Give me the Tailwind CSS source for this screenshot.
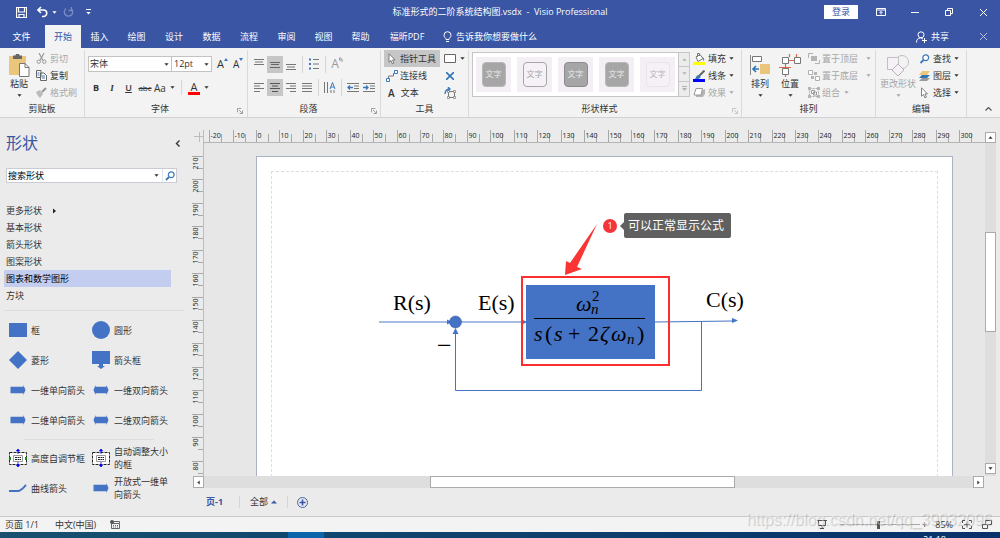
<!DOCTYPE html>
<html lang="zh-CN">
<head>
    <meta charset="UTF-8">
    <meta name="viewport" content="width=device-width, initial-scale=1">
    <title>标准形式的二阶系统结构图.vsdx - Visio Professional</title>
    <script src="https://cdn.jsdelivr.net/npm/@tailwindcss/browser@4"></script>
</head>
<body class="flex h-screen flex-col overflow-hidden bg-[#ebebeb] font-['Open_Sans','Noto_Sans_CJK_SC',sans-serif] text-[9px] leading-3 text-[#333333]">

    <!-- shared icons -->
    <svg class="hidden">
        <symbol id="caret" viewBox="0 0 5 3"><path d="M.4.300h4.200L2.500 2.700z" fill="currentColor"/></symbol>
        <symbol id="launcher" viewBox="0 0 7 7"><path d="M.5 5V.5H5M2.500 2.500l3 3M6.500 3v3.500H3" fill="none" stroke="currentColor"/></symbol>
        <symbol id="close" viewBox="0 0 9 9"><path d="M1 1l7 7M8 1l-7 7" fill="none" stroke="currentColor"/></symbol>
        <symbol id="pointer" viewBox="0 0 8 12"><path d="M1 .8v8.400l2-1.800 1.400 3.400 1.500-.7-1.400-3.200H7z" fill="#fff" stroke="#666" stroke-width=".8"/></symbol>
        <symbol id="loupe" viewBox="0 0 10 10"><circle cx="6.200" cy="3.800" r="2.900" fill="#fff" stroke="#3c78b8" stroke-width="1.200"/><path d="M4 6L1 9" stroke="#3c78b8" stroke-width="1.800"/></symbol>
        <symbol id="one-way" viewBox="0 0 18 12"><path d="M0 2h15.500V0L18 6l-2.500 6v-2H0z" fill="#4472c4"/></symbol>
        <symbol id="two-way" viewBox="0 0 18 12"><path d="M0 6l2.500-6v2h13V0L18 6l-2.500 6v-2h-13v2z" fill="#4472c4"/></symbol>
    </svg>

    <!-- title bar -->
    <header class="shrink-0 bg-[#3955a3] text-white">
        <div class="grid h-6 grid-cols-[1fr_auto_1fr] items-center">
            <div class="flex items-center pl-4">
                <button aria-label="保存"><svg class="h-[11px] w-[11px]" viewBox="0 0 11 11"><path d="M.5.5h10v10h-10zM2.500.5V5h6V.5M3 10.500V7.500h5v3" fill="none" stroke="#fff" stroke-width="1.200"/></svg></button>
                <button class="ml-2.5" aria-label="撤消"><svg class="h-3 w-[11px]" viewBox="0 0 11 12"><path d="M1 4h5.500a3 3 0 0 1 0 6.500H5M4 1L1 4l3 3" fill="none" stroke="#fff" stroke-width="1.600"/></svg></button>
                <svg class="ml-1 h-[3px] w-[5px]"><use href="#caret"/></svg>
                <button class="ml-1.5" aria-label="重复"><svg class="h-3 w-[11px]" viewBox="0 0 11 12"><path d="M8 2.500a4.200 4.200 0 1 1-5 0M5.500 4.500H8.500V1" fill="none" stroke="#7a8dc4" stroke-width="1.300"/></svg></button>
                <button class="ml-3" aria-label="自定义快速访问工具栏"><svg class="h-1.5 w-[5px]" viewBox="0 0 5 6"><path d="M0 .5h5" stroke="#fff"/><path d="M.3 3h4.400L2.500 5.500z" fill="#fff"/></svg></button>
            </div>
            <h1 class="whitespace-pre">标准形式的二阶系统结构图.vsdx  -  Visio Professional</h1>
            <div class="flex items-center justify-end">
                <button class="mr-1.5 h-3.5 w-[34px] bg-white text-[#3955a3]">登录</button>
                <button class="flex w-[34px] justify-center" aria-label="功能区显示选项"><svg class="h-2 w-[10px]" viewBox="0 0 10 8"><path d="M.5.5h9v7h-9zM.5 2h9M5 6.500V3.500M3.500 5L5 3.500 6.500 5" fill="none" stroke="#fff"/></svg></button>
                <button class="flex w-[34px] justify-center" aria-label="最小化"><svg class="h-2 w-2" viewBox="0 0 8 8"><path d="M0 4.500h8" stroke="#fff"/></svg></button>
                <button class="flex w-[34px] justify-center" aria-label="还原"><svg class="h-2 w-2" viewBox="0 0 8 8"><path d="M.5 2.500h5v5h-5zM2.500 2V.5h5v5H6" fill="none" stroke="#fff"/></svg></button>
                <button class="flex w-[34px] justify-center" aria-label="关闭"><svg class="h-[9px] w-[9px]"><use href="#close"/></svg></button>
            </div>
        </div>

        <nav class="flex h-6 items-stretch pt-px">
            <button class="w-[45px] pr-0.5">文件</button>
            <button class="w-9 bg-[#f3f3f3] text-[#3955a3]">开始</button>
            <button class="w-[37px]">插入</button>
            <button class="w-[37px]">绘图</button>
            <button class="w-[38px]">设计</button>
            <button class="w-[37px]">数据</button>
            <button class="w-[38px]">流程</button>
            <button class="w-[37px]">审阅</button>
            <button class="w-[37px]">视图</button>
            <button class="w-[37px]">帮助</button>
            <button class="w-14 whitespace-nowrap">福昕PDF</button>
            <button class="ml-2 flex items-center gap-1 whitespace-nowrap">
                <svg class="h-3 w-[9px]" viewBox="0 0 9 12"><path d="M3 8.500c0-1.500-2-2-2-4.300a3.500 3.500 0 0 1 7 0c0 2.300-2 2.800-2 4.300zM3 10.500h3" fill="none" stroke="#fff"/></svg>
                告诉我你想要做什么
            </button>
            <button class="ml-auto flex items-center gap-1">
                <svg class="h-3 w-[11px]" viewBox="0 0 11 12"><circle cx="5" cy="3.800" r="3" fill="none" stroke="#fff"/><path d="M.5 11.500c0-3 1.500-4.500 4-4.500M5 7l2 1M8.500 7v5M6 9.500h5" fill="none" stroke="#fff"/></svg>
                共享
            </button>
            <button class="ml-[17px] flex w-[34px] items-center justify-center text-[#b8c2e0]" aria-label="关闭文档"><svg class="h-[9px] w-[9px]"><use href="#close"/></svg></button>
        </nav>
    </header>

    <!-- ribbon -->
    <section class="flex h-[70px] shrink-0 border-b border-[#d2d2d2] bg-[#f3f3f3] pt-0.5 *:shrink-0">
        <div class="flex w-[85px] flex-col border-r border-[#dadada]">
            <div class="flex flex-1 pl-2">
                <button class="flex w-[22px] flex-col items-center">
                    <svg class="mt-1 h-6 w-[22px]" viewBox="0 0 22 24"><path d="M1 2h17v19H1z" fill="#ecc57c"/><path d="M5 1.500h2.500a2 2 0 0 1 4 0H14V5H5z" fill="#666"/><path d="M11.500 9.500H17l4 4v9h-9.500z" fill="#fff" stroke="#777"/><path d="M17 9.500v4h4" fill="none" stroke="#777"/></svg>
                    <span>粘贴</span>
                    <svg class="mt-1 h-[3px] w-[5px]"><use href="#caret"/></svg>
                </button>
                <div class="ml-1.5 grid grid-rows-3 whitespace-nowrap">
                    <button class="flex items-center gap-[3px] text-[#a6a6a6]"><svg class="h-[11px] w-[11px]" viewBox="0 0 11 11"><path d="M3 0l4 7.500M8 0L4 7.500" stroke="#999" stroke-width="1.200"/><circle cx="2.700" cy="8.700" r="1.700" fill="none" stroke="#999"/><circle cx="8.300" cy="8.700" r="1.700" fill="none" stroke="#999"/></svg>剪切</button>
                    <button class="flex items-center gap-[3px]"><svg class="h-[11px] w-[11px]" viewBox="0 0 11 11"><path d="M.5.5H5v7H.5zM4.500 3H8l2.500 2.500v5h-6z" fill="#fff" stroke="#666"/><path d="M6 6h3M6 8h3M1.500 3h2M1.500 5h2" stroke="#3c78b8"/></svg>复制</button>
                    <button class="flex items-center gap-[3px] text-[#a6a6a6]"><svg class="h-[11px] w-[11px]" viewBox="0 0 11 11"><path d="M0 5l4-2 3 4-3 4-2-2z" fill="#bbb"/><path d="M6 5l4-4" stroke="#999" stroke-width="2.200"/></svg>格式刷</button>
                </div>
            </div>
            <div class="flex h-4 items-center justify-center">剪贴板</div>
        </div>

        <div class="flex w-[163px] flex-col border-r border-[#dadada]">
            <div class="flex flex-1 flex-col gap-1.5 pt-[5px] pl-[3px]">
                <div class="flex h-[18px] items-center">
                    <label class="relative flex items-center"><select aria-label="字体" class="h-4 w-[84px] appearance-none border border-[#c3c3c3] bg-white pl-px text-[9px]"><option>宋体</option></select><svg class="pointer-events-none absolute right-[3px] h-[3px] w-[5px]"><use href="#caret"/></svg></label>
                    <label class="relative flex items-center"><select aria-label="字号" class="h-4 w-10 appearance-none border border-l-0 border-[#c3c3c3] bg-white pl-0.5 text-[9px]"><option>12pt</option></select><svg class="pointer-events-none absolute right-[3px] h-[3px] w-[5px]"><use href="#caret"/></svg></label>
                    <button class="ml-[5px] flex w-3 text-[11px]" aria-label="增大字号">A<svg class="h-[3px] w-1" viewBox="0 0 4 3"><path d="M0 3h4L2 0z" fill="#3c78b8"/></svg></button>
                    <button class="ml-1 flex w-3 text-[10px]" aria-label="减小字号">A<svg class="h-[3px] w-1" viewBox="0 0 4 3"><path d="M0 0h4L2 3z" fill="#3c78b8"/></svg></button>
                </div>
                <div class="flex h-[17px] items-center">
                    <button class="w-4 font-bold">B</button>
                    <button class="w-4 font-['Liberation_Serif'] font-bold italic">I</button>
                    <button class="w-[17px] font-semibold underline">U</button>
                    <button class="w-4 text-[8px] line-through">abc</button>
                    <button class="flex w-[22px] items-center justify-between pl-px text-[10px]">Aa<svg class="h-[3px] w-[5px]"><use href="#caret"/></svg></button>
                    <span class="mx-1.5 h-[15px] w-px bg-[#d5d5d5]"></span>
                    <button class="flex items-center gap-1"><span class="h-3.5 w-3 border-b-[3px] border-[#ff0000] text-[11px] leading-[11px]">A</span><svg class="h-[3px] w-[5px]"><use href="#caret"/></svg></button>
                </div>
            </div>
            <div class="grid h-4 grid-cols-[1fr_auto_1fr] items-center pr-1"><span class="col-start-2 pr-2">字体</span><svg class="mt-1 h-1.5 w-1.5 justify-self-end text-[#888]"><use href="#launcher"/></svg></div>
        </div>

        <div class="flex w-[133px] flex-col border-r border-[#dadada]">
            <div class="flex flex-1 flex-col gap-1.5 pt-[5px] pl-[3px]">
                <div class="flex h-[18px] items-center *:flex *:h-[17px] *:items-center *:justify-center">
                    <button class="w-4" aria-label="顶端对齐"><svg class="h-[11px] w-[10px]" viewBox="0 0 10 11"><path d="M0 .5h10M1 3h8M0 5.500h10" stroke="#777"/></svg></button>
                    <button class="w-4 bg-[#c6c6c6]" aria-label="中部对齐"><svg class="h-[11px] w-[10px]" viewBox="0 0 10 11"><path d="M0 3.500h10M1 5.500h8M0 8.500h10" stroke="#666"/></svg></button>
                    <button class="w-4" aria-label="底端对齐"><svg class="h-[11px] w-[10px]" viewBox="0 0 10 11"><path d="M0 5.500h10M1 8h8M0 10.500h10" stroke="#777"/></svg></button>
                    <span class="mx-[3px] w-px bg-[#d5d5d5]"></span>
                    <button class="w-4" aria-label="项目符号"><svg class="h-3 w-[10px]" viewBox="0 0 10 12"><path d="M0 1.500h2M0 6h2M0 10.500h2" stroke="#3c78b8" stroke-width="2"/><path d="M4 1.500h6M4 6h6M4 10.500h6" stroke="#777"/></svg></button>
                    <span class="mx-[3px] w-px bg-[#d5d5d5]"></span>
                    <button class="w-4 text-[12px] text-[#999]" aria-label="旋转文本">A<svg class="mb-2 h-1.5 w-1" viewBox="0 0 4 6"><path d="M0 2h3v3M1.500 0L0 2l1.500 2" fill="none" stroke="#999"/></svg></button>
                </div>
                <div class="flex h-[17px] items-center *:flex *:h-[17px] *:items-center *:justify-center">
                    <button class="w-4" aria-label="左对齐"><svg class="h-[9px] w-[10px]" viewBox="0 0 10 9"><path d="M0 .5h10M0 3h6M0 5.500h10M0 8.500h6" stroke="#777"/></svg></button>
                    <button class="w-4 bg-[#c6c6c6]" aria-label="居中"><svg class="h-[9px] w-[10px]" viewBox="0 0 10 9"><path d="M0 .5h10M2 3h6M0 5.500h10M2 8.500h6" stroke="#555"/></svg></button>
                    <button class="w-4" aria-label="右对齐"><svg class="h-[9px] w-[10px]" viewBox="0 0 10 9"><path d="M0 .5h10M4 3h6M0 5.500h10M4 8.500h6" stroke="#777"/></svg></button>
                    <button class="w-4" aria-label="两端对齐"><svg class="h-[9px] w-[10px]" viewBox="0 0 10 9"><path d="M0 .5h10M0 3h10M0 5.500h10M0 8.500h10" stroke="#777"/></svg></button>
                    <span class="mx-[3px] w-px bg-[#d5d5d5]"></span>
                    <button class="w-4" aria-label="文字方向"><svg class="h-[11px] w-3" viewBox="0 0 12 11"><path d="M.5 0v11M3.500 0v11M7 8v3M10 8v3" stroke="#777"/><path d="M6 7l2.500-6.500L11 7M7 5h3" fill="none" stroke="#3c78b8"/></svg></button>
                    <span class="mx-[3px] w-px bg-[#d5d5d5]"></span>
                    <button class="w-4" aria-label="减少缩进"><svg class="h-[9px] w-3" viewBox="0 0 12 9"><path d="M0 .5h12M7 3h5M7 5.500h5M0 8.500h12" stroke="#777"/><path d="M6 4.500H1M3 2.500l-2 2 2 2" fill="none" stroke="#3c78b8" stroke-width="1.300"/></svg></button>
                    <button class="w-4" aria-label="增加缩进"><svg class="h-[9px] w-3" viewBox="0 0 12 9"><path d="M0 .5h12M7 3h5M7 5.500h5M0 8.500h12" stroke="#777"/><path d="M0 4.500h5M3 2.500l2 2-2 2" fill="none" stroke="#3c78b8" stroke-width="1.300"/></svg></button>
                </div>
            </div>
            <div class="grid h-4 grid-cols-[1fr_auto_1fr] items-center pr-[3px]"><span class="col-start-2 pr-2">段落</span><svg class="mt-1 h-1.5 w-1.5 justify-self-end text-[#888]"><use href="#launcher"/></svg></div>
        </div>

        <div class="flex w-[88px] flex-col border-r border-[#dadada]">
            <div class="grid flex-1 grid-cols-[56px_1fr] grid-rows-3 gap-x-1 pl-[3px]">
                <button class="flex items-center gap-1 bg-[#c6c6c6] pl-1 whitespace-nowrap"><svg class="h-3 w-2"><use href="#pointer"/></svg>指针工具</button>
                <button class="flex items-center gap-1" aria-label="矩形"><svg class="h-[9px] w-3" viewBox="0 0 12 9"><path d="M.5.5h11v8H.5z" fill="#fff" stroke="#666"/></svg><svg class="h-[3px] w-[5px]"><use href="#caret"/></svg></button>
                <button class="flex items-center gap-0.5 pl-0.5 whitespace-nowrap"><svg class="h-3 w-3" viewBox="0 0 12 12"><path d="M2.500 8V6h5V3" fill="none" stroke="#777"/><path d="M.5 8.500h3v3h-3zM8.500.5h3v3h-3z" fill="#fff" stroke="#3c78b8"/></svg>连接线</button>
                <button class="flex items-center pl-0.5" aria-label="连接点"><svg class="h-2 w-2" viewBox="0 0 8 8"><path d="M0 0l8 8M8 0L0 8" stroke="#2e75b6" stroke-width="1.600"/></svg></button>
                <button class="flex items-center gap-1.5 pl-1"><span class="text-[10px] font-semibold">A</span>文本</button>
                <button class="flex items-center" aria-label="文本块"><svg class="h-3 w-3" viewBox="0 0 12 12"><path d="M4.500 4.500h6v6h-6z" fill="none" stroke="#777"/><path d="M3.500 3.500h2v2h-2zM9.500 3.500h2v2h-2zM3.500 9.500h2v2h-2zM9.500 9.500h2v2h-2z" fill="#fff" stroke="#777" stroke-width=".7"/><path d="M1 7c0-3 1-4.500 4.500-5M4 0l2 2-2 1.500" fill="none" stroke="#3c78b8" stroke-width="1.300"/></svg></button>
            </div>
            <div class="flex h-4 items-center justify-center">工具</div>
        </div>

        <div class="flex w-[273px] flex-col border-r border-[#dadada]">
            <div class="flex flex-1 pl-[3px]">
                <div class="mt-0.5 flex h-[45px] w-[218px] border border-[#c6c6c6] bg-white">
                    <div class="flex flex-1 items-center gap-1.5 pl-[3px] *:flex *:h-[35px] *:w-[35px] *:items-center *:justify-center *:bg-[#f4eff5]">
                        <button><span class="h-[25px] w-6 rounded border border-[#b8b8b8] bg-[#a6a6a6] pt-[5px] text-[8px] text-[#e8e8e8]">文字</span></button>
                        <button><span class="h-[25px] w-6 rounded border border-[#a6a6a6] bg-[#f5f1f6] pt-[5px] text-[8px] text-[#a6a6a6]">文字</span></button>
                        <button><span class="h-[25px] w-6 rounded border border-[#8c8c8c] bg-[#a6a6a6] pt-[5px] text-[8px] text-[#e8e8e8]">文字</span></button>
                        <button><span class="h-[25px] w-6 rounded border border-[#b8b8b8] bg-[#a6a6a6] pt-[5px] text-[8px] text-[#e8e8e8]">文字</span></button>
                        <button><span class="h-[25px] w-6 rounded border border-[#e9e4ea] bg-[#f5f1f6] pt-[5px] text-[8px] text-[#b4b4b4]">文字</span></button>
                    </div>
                    <div class="grid w-[11px] grid-rows-3 divide-y divide-[#c6c6c6] border-l border-[#c6c6c6] bg-[#ececec] text-[#b0b0b0] *:flex *:items-center *:justify-center">
                        <button aria-label="上一行"><svg class="h-[3px] w-[5px] rotate-180"><use href="#caret"/></svg></button>
                        <button aria-label="下一行"><svg class="h-[3px] w-[5px]"><use href="#caret"/></svg></button>
                        <button aria-label="其他"><svg class="h-[5px] w-[5px]" viewBox="0 0 5 5"><path d="M0 .5h5" stroke="#b0b0b0"/><path d="M0 2h5L2.500 5z" fill="#b0b0b0"/></svg></button>
                    </div>
                </div>
                <div class="ml-[3px] grid grid-rows-3 whitespace-nowrap">
                    <button class="flex items-center gap-[3px]"><svg class="h-3 w-3" viewBox="0 0 12 12"><path d="M3 4l4-2.500 3 4-5 3z" fill="#fff" stroke="#777"/><path d="M4.500 4V.5h2V3" fill="none" stroke="#777"/><path d="M9.500 4c2 1.500 2 3 1 4z" fill="#3c78b8"/><path d="M0 9h12v3H0z" fill="#ffff00"/></svg>填充<svg class="h-[3px] w-[5px]"><use href="#caret"/></svg></button>
                    <button class="flex items-center gap-[3px]"><svg class="h-3 w-3" viewBox="0 0 12 12"><path d="M11.500.5L6 6" stroke="#666" stroke-width="2"/><path d="M2 9c1-1 1-4 4-4l1.500 1.500C7.500 9 5 9.500 2 9z" fill="#3c78b8"/><path d="M0 9h12v3H0z" fill="#0000ff"/></svg>线条<svg class="h-[3px] w-[5px]"><use href="#caret"/></svg></button>
                    <button class="flex items-center gap-[3px] text-[#a6a6a6]"><svg class="h-3 w-3" viewBox="0 0 12 12"><path d="M3 5v5h7l2-3V2z" fill="#b5b5b5"/><path d="M3 1.500h6.500L8 8H1z" fill="#fff" stroke="#999"/></svg>效果<svg class="h-[3px] w-[5px]"><use href="#caret"/></svg></button>
                </div>
            </div>
            <div class="grid h-4 grid-cols-[1fr_auto_1fr] items-center pr-[3px]"><span class="col-start-2 pr-2">形状样式</span><svg class="mt-1 h-1.5 w-1.5 justify-self-end text-[#bbb]"><use href="#launcher"/></svg></div>
        </div>

        <div class="flex w-[134px] flex-col border-r border-[#dadada]">
            <div class="flex flex-1 pl-1.5">
                <button class="flex w-6 flex-col items-center">
                    <svg class="mt-1 h-6 w-5" viewBox="0 0 20 24"><path d="M.5 1v20" stroke="#888"/><path d="M2.500 2.500h9v5h-9z" fill="#fff" stroke="#777"/><path d="M10 10h10v10H10z" fill="#ecc57c"/><path d="M9 15H3.500M6 12l-3 3 3 3" fill="none" stroke="#2e75b6" stroke-width="1.600"/></svg>
                    <span>排列</span>
                    <svg class="mt-1 h-[3px] w-[5px]"><use href="#caret"/></svg>
                </button>
                <button class="ml-1.5 flex w-6 flex-col items-center">
                    <svg class="mt-1 h-6 w-[22px]" viewBox="0 0 22 24"><path d="M0 13.500h12M9 6.500h7M6.500 9v6M10.500 0v3M17.500 0v3M6.500 20v3" stroke="#e0694a" stroke-width="1.200"/><path d="M3.500 3.500h6v6h-6zM15.500 3.500h6v6h-6zM3.500 14.500h6v6h-6z" fill="#fff" stroke="#777"/></svg>
                    <span>位置</span>
                    <svg class="mt-1 h-[3px] w-[5px]"><use href="#caret"/></svg>
                </button>
                <div class="ml-1.5 grid grid-rows-3 whitespace-nowrap text-[#a6a6a6]">
                    <button class="flex items-center gap-0.5"><svg class="h-[11px] w-3" viewBox="0 0 12 11"><path d="M.5 5V.5H5M11.500 7v3.500H7" fill="none" stroke="#b0b0b0"/><path d="M3 3h6v5H3z" fill="#b5b5b5"/></svg>置于顶层<svg class="ml-1.5 h-[3px] w-[5px]"><use href="#caret"/></svg></button>
                    <button class="flex items-center gap-0.5"><svg class="h-[11px] w-3" viewBox="0 0 12 11"><path d="M.5.5h4v4h-4zM7.500 6.500h4v4h-4z" fill="#fff" stroke="#b0b0b0"/><path d="M6 2h3v3H6zM3 6h3v3H3z" fill="#b5b5b5"/></svg>置于底层<svg class="ml-1.5 h-[3px] w-[5px]"><use href="#caret"/></svg></button>
                    <button class="flex items-center gap-0.5"><svg class="h-[11px] w-3" viewBox="0 0 12 11"><path d="M1.500 1.500h9v8h-9z" fill="none" stroke="#aaa" stroke-dasharray="2 1"/><path d="M3.500 3.500h3v3h-3zM5.500 5h3v3h-3z" fill="#fff" stroke="#999"/><path d="M0 0h3v3H0zM9 0h3v3H9zM0 8h3v3H0zM9 8h3v3H9z" fill="#b5b5b5"/></svg>组合<svg class="ml-0.5 h-[3px] w-[5px]"><use href="#caret"/></svg></button>
                </div>
            </div>
            <div class="flex h-4 items-center justify-center">排列</div>
        </div>

        <div class="flex w-[91px] flex-col border-r border-[#dadada]">
            <div class="flex flex-1 pl-1">
                <button class="flex w-9 flex-col items-center whitespace-nowrap text-[#a6a6a6]">
                    <svg class="mt-1 h-6 w-[22px]" viewBox="0 0 22 24"><circle cx="15" cy="8" r="6.500" fill="#f3f3f3" stroke="#c0c0c0"/><path d="M.5 3.500h11v12H.5z" fill="#f6f1f7" stroke="#c0c0c0"/><path d="M11 10l6 6-6 6-6-6z" fill="#f6f1f7" stroke="#b5b5b5"/></svg>
                    <span>更改形状</span>
                    <svg class="mt-1 h-[3px] w-[5px]"><use href="#caret"/></svg>
                </button>
                <div class="ml-[3px] grid grid-rows-3 whitespace-nowrap">
                    <button class="flex items-center gap-[3px]"><svg class="h-[10px] w-[11px]"><use href="#loupe"/></svg>查找<svg class="h-[3px] w-[5px]"><use href="#caret"/></svg></button>
                    <button class="flex items-center gap-[3px]"><svg class="h-[10px] w-[11px]" viewBox="0 0 11 10"><path d="M3 7h8l-3 3H0z" fill="#999"/><path d="M3 4h8L8 7H0z" fill="#2e75b6"/><path d="M3 0h8L8 4H0z" fill="#ecc57c"/></svg>图层<svg class="h-[3px] w-[5px]"><use href="#caret"/></svg></button>
                    <button class="flex items-center gap-[3px]"><svg class="h-3 w-[11px]"><use href="#pointer"/></svg>选择<svg class="h-[3px] w-[5px]"><use href="#caret"/></svg></button>
                </div>
            </div>
            <div class="flex h-4 items-center justify-center">编辑</div>
        </div>
        <button class="mr-2 mb-1.5 ml-auto self-end" aria-label="折叠功能区"><svg class="h-1 w-[7px]" viewBox="0 0 7 4"><path d="M.5 3.500l3-3 3 3" fill="none" stroke="#555" stroke-width="1.200"/></svg></button>
    </section>

    <main class="flex min-h-0 flex-1">
        <!-- shapes panel -->
        <aside class="w-[190px] shrink-0 overflow-hidden">
            <div class="flex h-[50px] items-center justify-between pr-2.5 pl-1.5">
                <h2 class="text-[16px] leading-5 text-[#3955a3]">形状</h2>
                <button aria-label="最小化形状窗口"><svg class="h-[7px] w-[5px]" viewBox="0 0 5 7"><path d="M4.500.5l-3 3 3 3" fill="none" stroke="#333" stroke-width="1.400"/></svg></button>
            </div>
            <div class="mr-[13px] ml-1.5 flex h-[15px] border border-[#c9ccd3] bg-white">
                <input type="text" aria-label="搜索形状" value="搜索形状" class="min-w-0 flex-1 pl-px text-[9px] text-black outline-none">
                <button class="px-[3px]" aria-label="搜索选项"><svg class="h-[3px] w-[5px]"><use href="#caret"/></svg></button>
                <button class="flex w-3.5 items-center justify-center border-l border-[#dfe3ea]" aria-label="搜索"><svg class="h-[10px] w-[10px]"><use href="#loupe"/></svg></button>
            </div>
            <ul class="mt-[19px] mr-[19px] ml-1 *:flex *:h-[17px] *:items-center *:pl-0.5">
                <li>更多形状<svg class="ml-[11px] h-[6px] w-1" viewBox="0 0 4 6"><path d="M0 .5v5L3 3z" fill="#222"/></svg></li>
                <li>基本形状</li>
                <li>箭头形状</li>
                <li>图案形状</li>
                <li class="bg-[#c2cdf0] text-black">图表和数学图形</li>
                <li>方块</li>
            </ul>
            <div class="mt-1.5 mr-1.5 ml-1 h-px bg-[#dcdcdc]"></div>
            <div class="mt-1 ml-[9px] grid auto-rows-[30px] grid-cols-[83px_83px] *:flex *:items-center *:gap-1 *:leading-[13px]">
                <div><svg class="h-[18px] w-[18px] shrink-0"><path d="M0 2h18v14H0z" fill="#4472c4"/></svg>框</div>
                <div><svg class="h-[18px] w-[18px] shrink-0"><circle cx="9" cy="9" r="9" fill="#4472c4"/></svg>圆形</div>
                <div><svg class="h-[18px] w-[18px] shrink-0"><path d="M9 0l9 9-9 9-9-9z" fill="#4472c4"/></svg>菱形</div>
                <div><svg class="h-[18px] w-[18px] shrink-0"><path d="M0 0h18v13h-7v2h2l-4 3-4-3h2v-2H0z" fill="#4472c4"/></svg>箭头框</div>
                <div><svg class="h-[10px] w-[18px] shrink-0"><use href="#one-way"/></svg>一维单向箭头</div>
                <div><svg class="h-[10px] w-[18px] shrink-0"><use href="#two-way"/></svg>一维双向箭头</div>
                <div><svg class="h-[10px] w-[18px] shrink-0"><use href="#one-way"/></svg>二维单向箭头</div>
                <div><svg class="h-[10px] w-[18px] shrink-0"><use href="#two-way"/></svg>二维双向箭头</div>
            </div>
            <div class="mt-1 mr-9 ml-6 h-px bg-[#dcdcdc]"></div>
            <div class="mt-[3px] ml-[9px] grid auto-rows-[30px] grid-cols-[83px_83px] *:flex *:items-center *:gap-1 *:leading-[13px]">
                <div><svg class="h-5 w-[18px] shrink-0" viewBox="0 0 18 20"><path d="M.5 4.500h17v12H.5z" fill="#fff" stroke="#222" stroke-dasharray="3 1"/><path d="M4.500 7.500h9v6h-9z" fill="none" stroke="#999"/><path d="M6 9.500h6M6 11.500h6" stroke="#222" stroke-dasharray="2 .5"/><path d="M9 2v4M9 14v4M7.500 3h3L9 1zM7.500 17h3L9 19z" fill="#0000ff" stroke="#0000ff" stroke-width=".8"/><path d="M0 9h2v3H0zM16 9h2v3h-2z" fill="#108a10"/></svg>高度自调节框</div>
                <div><svg class="h-5 w-[18px] shrink-0" viewBox="0 0 18 20"><path d="M.5 4.500h17v12H.5z" fill="#fff" stroke="#222" stroke-dasharray="3 1"/><path d="M4.500 7.500h9v6h-9z" fill="none" stroke="#999"/><path d="M6 9.500h6M6 11.500h6" stroke="#222" stroke-dasharray="2 .5"/><path d="M9 2v4M9 14v4M7.500 3h3L9 1zM7.500 17h3L9 19z" fill="#0000ff" stroke="#0000ff" stroke-width=".8"/></svg><span class="w-14">自动调整大小的框</span></div>
                <div><svg class="h-3 w-[18px] shrink-0" viewBox="0 0 18 12"><path d="M0 9h9c3 0 5-3 8-6" fill="none" stroke="#4472c4" stroke-width="2"/></svg>曲线箭头</div>
                <div><svg class="h-[10px] w-[18px] shrink-0"><use href="#one-way"/></svg><span class="w-14">开放式一维单向箭头</span></div>
            </div>
        </aside>

        <!-- drawing window -->
        <div class="flex min-w-0 flex-1 flex-col pt-3">
            <div class="flex min-h-0 flex-1 overflow-hidden">
                <svg id="rulerV" class="h-full w-3.5 shrink-0" font-family="Open Sans, sans-serif" font-size="7" fill="#222"></svg>
                <div class="flex min-w-0 flex-1 flex-col">
                    <svg id="rulerH" class="h-[13px] w-full shrink-0" font-family="Open Sans, sans-serif" font-size="7" fill="#222"></svg>
                    <div class="relative flex-1 overflow-hidden bg-[#e7e7e7]">
                        <div class="absolute top-[13px] -bottom-4 left-[52px] w-[697px] border border-[#abb3c2] bg-white p-3.5">
                            <div class="h-full border border-dashed border-[#dfdbe3]"></div>
                        </div>
                        <svg class="absolute top-0 left-0" width="780" height="333" viewBox="204 143 780 333" font-family="Liberation Serif, serif" font-size="22">
                            <g fill="none" stroke="#4472c4">
                                <path d="M379 322h72M461 322h65" stroke="#8ba6da" stroke-width="1.500"/>
                                <path d="M655 322l78-1M701.500 321v69.500h-246V334"/>
                            </g>
                            <path d="M452 322l-5-2.500v5zM738 320.500l-6-2.500v5zM455.500 328l-3 6h6zM527 322l-4-2v4z" fill="#4472c4"/>
                            <circle cx="455.500" cy="322" r="6" fill="#4472c4" stroke="#3560ab" stroke-width=".6"/>
                            <rect x="526" y="285" width="129" height="74" fill="#4472c4"/>
                            <rect x="522" y="277" width="147" height="88" fill="none" stroke="#fb2f2f" stroke-width="2"/>

                            <text x="393" y="310">R(s)</text>
                            <text x="478" y="310">E(s)</text>
                            <text x="706" y="307">C(s)</text>
                            <text x="437" y="354" font-size="26">−</text>

                            <text font-style="italic"><tspan x="576" y="311">ω</tspan><tspan x="591" y="314" font-size="15">n</tspan></text>
                            <text x="592" y="301" font-size="15">2</text>
                            <path d="M534 318.500h111" stroke="#000"/>
                            <text y="341"><tspan x="534" font-style="italic">s</tspan><tspan x="545">(</tspan><tspan x="554" font-style="italic">s</tspan><tspan x="568">+</tspan><tspan x="588">2</tspan><tspan x="600" font-style="italic">ζ</tspan><tspan x="611" font-style="italic">ω</tspan><tspan x="627" y="344" font-size="15" font-style="italic">n</tspan><tspan x="637" y="341">)</tspan></text>

                            <path d="M565 275l1-14 4 2 27-39-20 43 5 2z" fill="#fb3434"/>
                            <circle cx="610" cy="226" r="7" fill="#f5333a"/>
                            <rect x="624" y="213" width="107" height="25" rx="2" fill="#606060"/>
                            <path d="M624 222l-4 4 4 4z" fill="#606060"/>
                            <g font-family="Open Sans, Noto Sans CJK SC, sans-serif" fill="#fff">
                                <text x="610" y="229" font-size="9" text-anchor="middle">1</text>
                                <text x="628" y="230" font-size="12">可以正常显示公式</text>
                            </g>
                        </svg>
                    </div>
                </div>
                <div class="mt-0.5 mr-1 flex w-[11px] shrink-0 flex-col bg-[#dedede]">
                    <button class="flex h-[11px] items-center justify-center border border-[#ababab] bg-white" aria-label="向上滚动"><svg class="h-[3px] w-[5px] rotate-180"><use href="#caret"/></svg></button>
                    <div class="mt-[89px] h-[100px] border border-[#ababab] bg-white"></div>
                    <button class="mt-auto mb-0.5 flex h-[11px] items-center justify-center border border-[#ababab] bg-white" aria-label="向下滚动"><svg class="h-[3px] w-[5px]"><use href="#caret"/></svg></button>
                </div>
            </div>
            <div class="mr-4 ml-[3px] flex h-3 shrink-0 bg-[#dedede]">
                <button class="flex w-[11px] items-center justify-center border border-[#ababab] bg-white" aria-label="向左滚动"><svg class="h-[3px] w-[5px] rotate-90"><use href="#caret"/></svg></button>
                <div class="ml-[226px] w-[305px] border border-[#ababab] bg-white"></div>
                <button class="ml-auto flex w-[11px] items-center justify-center border border-[#ababab] bg-white" aria-label="向右滚动"><svg class="h-[3px] w-[5px] -rotate-90"><use href="#caret"/></svg></button>
            </div>
            <div class="flex h-7 shrink-0 items-center pl-4">
                <button class="font-bold text-[#3955a3]">页-1</button>
                <span class="ml-4 h-3 w-px bg-[#d5d5d5]"></span>
                <button class="ml-2.5 flex items-center gap-[3px]">全部<svg class="h-1 w-[6px] text-[#3955a3]" viewBox="0 0 6 4"><path d="M0 3.500h6L3 .5z" fill="currentColor"/></svg></button>
                <span class="ml-2.5 h-3 w-px bg-[#d5d5d5]"></span>
                <button class="ml-[9px]" aria-label="插入页"><svg class="h-[11px] w-[11px]" viewBox="0 0 11 11"><circle cx="5.500" cy="5.500" r="5" fill="none" stroke="#3955a3" stroke-width=".9"/><path d="M2.500 5.500h6M5.500 2.500v6" stroke="#3955a3" stroke-width="1.600"/></svg></button>
            </div>
        </div>
    </main>

    <!-- status bar -->
    <footer class="relative shrink-0">
        <div class="flex h-4 items-center border-t border-[#c8c8c8] bg-[#f3f3f3] pr-2 pl-[5px]">
            <span>页面 1/1</span>
            <span class="ml-4">中文(中国)</span>
            <svg class="ml-3.5 h-[9px] w-[10px]" viewBox="0 0 10 9"><path d="M1.500 3.500h8v5h-8zM3 1.500h6.500v2" fill="none" stroke="#666"/><circle cx="2" cy="2" r="2" fill="#555"/><path d="M3 5.500h5M3 7h5" stroke="#666" stroke-dasharray="1 1"/></svg>
            <svg class="ml-auto h-[9px] w-[10px]" viewBox="0 0 10 9"><path d="M0 .5h10M1.500 1v4.500h7V1M5 5.500V8M3 8.500h4" fill="none" stroke="#555"/></svg>
            <button class="ml-3">−</button>
            <input type="range" aria-label="缩放" min="0" max="100" value="43" class="ml-0.5 h-2 w-[74px] appearance-none bg-[linear-gradient(#aaa,#aaa)] bg-[length:100%_1px] bg-center bg-no-repeat [&::-webkit-slider-thumb]:h-2 [&::-webkit-slider-thumb]:w-[3px] [&::-webkit-slider-thumb]:appearance-none [&::-webkit-slider-thumb]:bg-[#555]">
            <button class="ml-0.5">+</button>
            <span class="ml-2">85%</span>
            <svg class="ml-[9px] h-[9px] w-[10px]" viewBox="0 0 10 9"><path d="M.5 3V.5H3M7 .5h2.500V3M9.500 6v2.500H7M3 8.500H.5V6M5 1.500v6M2 4.500h6" fill="none" stroke="#555"/></svg>
            <svg class="ml-2.5 h-[9px] w-[10px]" viewBox="0 0 10 9"><path d="M3.500.5h6v4h-6zM.5 4.500h5v4h-5z" fill="#f3f3f3" stroke="#555"/></svg>
        </div>
        <div class="flex h-1.5 overflow-hidden bg-linear-to-r from-[#17516f] to-[#08306a] text-white">
            <div class="ml-[288px] w-9 bg-[#0b65ab]"></div>
            <span class="mt-0.5 mr-[54px] ml-auto">21:18</span>
        </div>
        <div class="pointer-events-none absolute right-2 bottom-1.5 font-['Liberation_Sans'] text-[16px] leading-6 text-white/45 [text-shadow:1px_1px_1px_#00000030]">https://blog.csdn.net/qq_39032096</div>
    </footer>

    <script>
        // both rulers: one long tick per 10 mm, one short tick half way
        const STEP = 703 / 30;
        const rulerH = document.getElementById('rulerH');
        const rulerV = document.getElementById('rulerV');

        let h = '<path d="M0 12.500H1600" stroke="#b5b5b5"/>';
        for (let mm = -20; mm <= 300; mm += 10) {
            const x = Math.round(52 + mm / 10 * STEP) + 0.5;
            h += `<path d="M${x} 0V12M${x + 12} 4V12" stroke="#a8a8a8"/><text x="${x + 1}" y="8">${mm}</text>`;
        }
        rulerH.innerHTML = h;

        let v = '<path d="M13.500 0V900M4 6.500H14M9.500 2V12" stroke="#bdbdbd"/>';
        for (let mm = 210; mm >= 80; mm -= 10) {
            const y = Math.round(26 + (210 - mm) / 10 * STEP) + 0.5;
            v += `<path d="M2 ${y}H13M8 ${y + 12}H13" stroke="#a8a8a8"/><text transform="translate(8 ${y + 1}) rotate(-90)" text-anchor="end">${mm}</text>`;
        }
        rulerV.innerHTML = v;
    </script>
</body>
</html>
